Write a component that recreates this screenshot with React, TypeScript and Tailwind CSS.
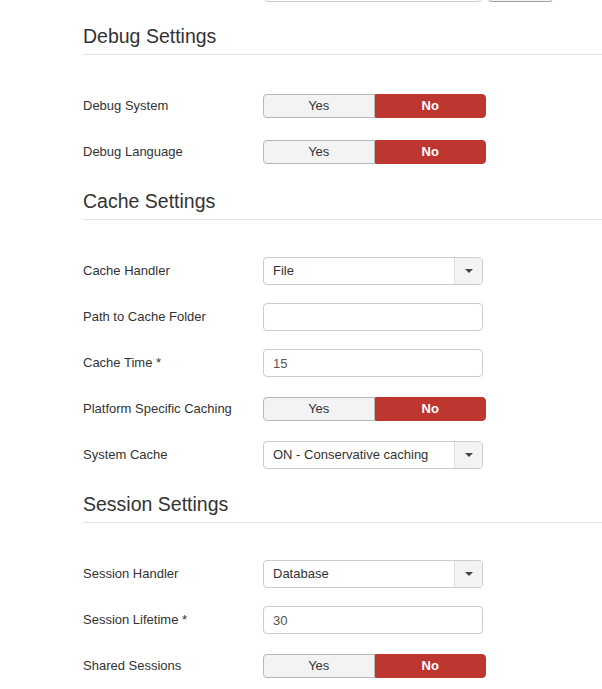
import { useState } from "react";

type Row =
  | { kind: "toggle"; label: string; value: boolean }
  | { kind: "select"; label: string; value: string }
  | { kind: "input"; label: string; value: string };

const sections: { title: string; rows: Row[] }[] = [
  {
    title: "Debug Settings",
    rows: [
      { kind: "toggle", label: "Debug System", value: false },
      { kind: "toggle", label: "Debug Language", value: false },
    ],
  },
  {
    title: "Cache Settings",
    rows: [
      { kind: "select", label: "Cache Handler", value: "File" },
      { kind: "input", label: "Path to Cache Folder", value: "" },
      { kind: "input", label: "Cache Time *", value: "15" },
      { kind: "toggle", label: "Platform Specific Caching", value: false },
      { kind: "select", label: "System Cache", value: "ON - Conservative caching" },
    ],
  },
  {
    title: "Session Settings",
    rows: [
      { kind: "select", label: "Session Handler", value: "Database" },
      { kind: "input", label: "Session Lifetime *", value: "30" },
      { kind: "toggle", label: "Shared Sessions", value: false },
    ],
  },
];

function Toggle({ initial }: { initial: boolean }) {
  const [on, setOn] = useState(initial);
  return (
    <div className="flex h-6 w-[223px]">
      <button
        className={`flex-1 rounded-l-[4px] border text-[13px] ${
          on ? "border-[#3c763d] bg-[#46a546] font-bold text-white" : "border-[#b8b8b8] bg-[#f3f3f3] text-[#333]"
        }`}
        onClick={() => setOn(true)}
        type="button"
      >
        Yes
      </button>
      <button
        className={`flex-1 rounded-r-[4px] border text-[13px] ${
          on ? "border-[#b8b8b8] border-l-0 bg-[#f3f3f3] text-[#333]" : "border-[#bd362f] bg-[#bd362f] font-bold text-white"
        }`}
        onClick={() => setOn(false)}
        type="button"
      >
        No
      </button>
    </div>
  );
}

function Select({ value }: { value: string }) {
  return (
    <div className="flex h-7 w-[220px] overflow-hidden rounded-[4px] border border-[#cccccc] bg-white">
      <span className="flex flex-1 items-center pl-[9px] text-[13px] text-[#333]">{value}</span>
      <span className="flex w-[28px] items-center justify-center border-l border-[#dddddd] bg-[#f3f3f3]">
        <span className="h-0 w-0 border-x-[4px] border-t-[4px] border-x-transparent border-t-[#444]" />
      </span>
    </div>
  );
}

function Input({ value }: { value: string }) {
  return (
    <input
      className="h-7 w-[220px] rounded-[4px] border border-[#cccccc] bg-white px-[9px] text-[13px] text-[#555] outline-none"
      defaultValue={value}
      type="text"
    />
  );
}

export default function App() {
  return (
    <div className="min-h-[689px] bg-white pb-6 pl-[83px] font-['Liberation_Sans',Arial,sans-serif] text-[#333]">
      {/* tail of the field above, cut off by the viewport */}
      <div className="flex h-[2px] items-end overflow-hidden pl-[181px]">
        <div className="h-7 w-[218px] shrink-0 rounded-[4px] border border-[#cccccc]" />
        <div className="ml-[6px] h-7 w-[65px] shrink-0 rounded-[4px] border border-[#b3b3b3] border-b-[#a0a0a0] bg-[#f3f3f3]" />
      </div>

      {sections.map((s, i) => (
        <section className={i === 0 ? "mt-[22px]" : "mt-[23px]"} key={s.title}>
          <h3 className="border-[#e5e5e5] border-b pb-[6px] font-normal text-[19.5px] leading-6">{s.title}</h3>
          <div className="mt-[37px] flex flex-col gap-[18px]">
            {s.rows.map((r) => (
              <div className="flex h-7 items-center" key={r.label}>
                <label className="w-[180px] shrink-0 text-[13px]">{r.label}</label>
                {r.kind === "toggle" && <Toggle initial={r.value} />}
                {r.kind === "select" && <Select value={r.value} />}
                {r.kind === "input" && <Input value={r.value} />}
              </div>
            ))}
          </div>
        </section>
      ))}
    </div>
  );
}
